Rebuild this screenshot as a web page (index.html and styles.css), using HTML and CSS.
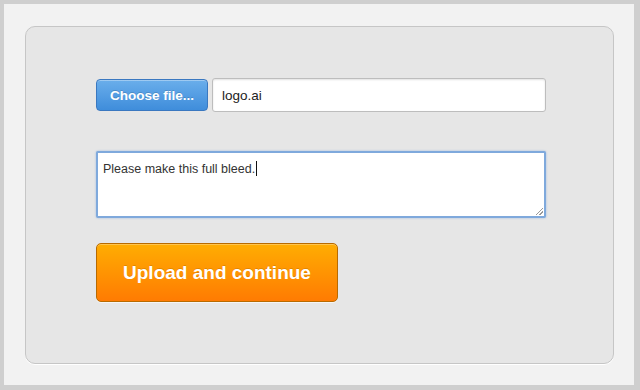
FILE: index.html
```html
<!DOCTYPE html>
<html>
  <head>
    <meta charset="utf-8">
    <title>Upload</title>
    <link rel="stylesheet" href="styles.css">
  </head>
  <body>
    <div class="frame">
      <form class="panel">
        <div class="file-row">
          <button type="button" class="button button--blue">Choose file...</button>
          <input type="text" class="field" value="logo.ai">
        </div>

        <div class="note">
          <div class="note__text">Please make this full bleed.<span class="caret"></span></div>
          <span class="note__grip"></span>
        </div>

        <button type="submit" class="button button--orange">Upload and continue</button>
      </form>
    </div>
  </body>
</html>
```

FILE: styles.css
```css
:root {
  --frame-gray: #cfcfcf;
  --page-gray: #f2f2f2;
  --panel-gray: #e6e6e6;
  --panel-border: #c6c6c6;
  --field-border: #bdbdbd;
  --focus-blue: #7fa9dc;
  --text: #333333;
  --white: #ffffff;
}

html,
body {
  margin: 0;
  height: 100%;
}

body {
  background: var(--frame-gray);
  font-family: 'Liberation Sans', Arial, sans-serif;
  color: var(--text);
}

.frame {
  box-sizing: border-box;
  width: 630px;
  height: 381px;
  margin: 4px 0 0 4px;
  padding: 22px 20px 21px 21px;
  background: var(--page-gray);
}

.panel {
  box-sizing: border-box;
  height: 100%;
  margin: 0;
  padding: 52px 68px 0 70px;
  background: var(--panel-gray);
  border: 1px solid var(--panel-border);
  border-radius: 10px;
  box-shadow: 0 1px 0 var(--white);
  display: flex;
  flex-direction: column;
  align-items: flex-start;
}

.file-row {
  display: flex;
  gap: 4px;
  width: 450px;
}

.button {
  font-family: 'Liberation Sans', Arial, sans-serif;
  font-weight: bold;
  color: var(--white);
  cursor: pointer;
}

.button--blue {
  box-sizing: border-box;
  width: 112px;
  height: 32px;
  font-size: 13.5px;
  border: 1px solid #3a78c0;
  border-radius: 4px;
  background: linear-gradient(#6aaeeb, #3f8ddb);
  box-shadow: inset 0 1px 0 rgba(255, 255, 255, .35);
  text-shadow: 0 -1px 0 rgba(0, 0, 0, .15);
}

.field {
  box-sizing: border-box;
  flex: 1;
  height: 34px;
  margin-top: -1px;
  padding: 0 9px;
  font-family: 'Liberation Sans', Arial, sans-serif;
  font-size: 13.5px;
  color: #222222;
  background: var(--white);
  border: 1px solid var(--field-border);
  border-radius: 3px;
  box-shadow: inset 0 1px 2px rgba(0, 0, 0, .12);
}

.note {
  box-sizing: border-box;
  position: relative;
  width: 450px;
  height: 67px;
  margin-top: 39px;
  padding: 8px 5px;
  background: var(--white);
  border: 2px solid var(--focus-blue);
  border-radius: 2px;
  box-shadow: 0 0 2px rgba(90, 150, 220, .6);
  font-size: 12.5px;
  color: #333333;
}

.caret {
  display: inline-block;
  width: 1px;
  height: 15px;
  margin-left: 1px;
  vertical-align: -3px;
  background: #111111;
}

.note__grip {
  position: absolute;
  right: 1px;
  bottom: 1px;
  width: 7px;
  height: 7px;
  background: linear-gradient(135deg, transparent 45%, #999999 45%, #999999 55%, transparent 55%, transparent 70%, #999999 70%, #999999 80%, transparent 80%);
}

.button--orange {
  box-sizing: border-box;
  width: 242px;
  height: 59px;
  margin-top: 25px;
  font-size: 19px;
  border: 1px solid #b86a00;
  border-radius: 5px;
  background: linear-gradient(#ffad02, #ff7b02);
  box-shadow: inset 0 1px 0 rgba(255, 255, 255, .3), 0 1px 0 rgba(255, 255, 255, .6);
  text-shadow: 0 -1px 0 rgba(0, 0, 0, .12);
}
```
